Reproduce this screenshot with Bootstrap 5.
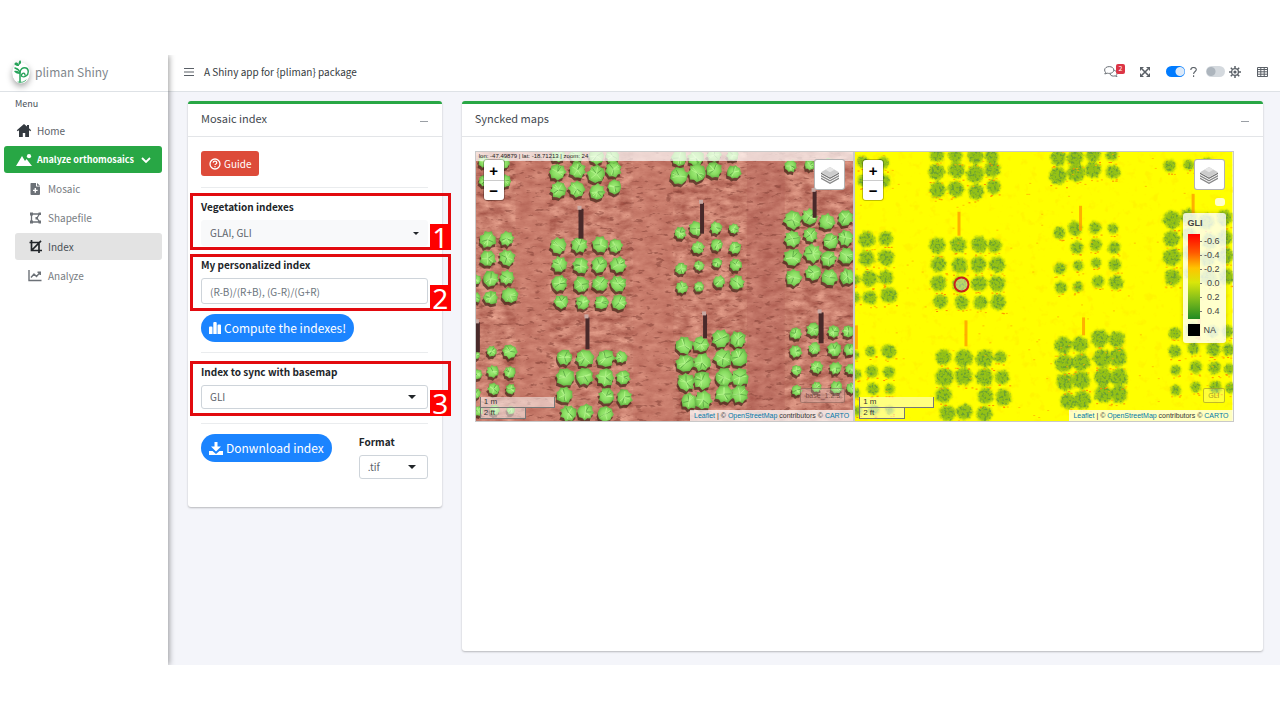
<!DOCTYPE html>
<html lang="en">
<head>
<meta charset="utf-8">
<meta name="viewport" content="width=device-width, initial-scale=1">
<title>pliman Shiny</title>
<link href="https://cdn.jsdelivr.net/npm/bootstrap@5.3.0/dist/css/bootstrap.min.css" rel="stylesheet">
<style>
body{font:400 10px/16px "Noto Sans CJK SC","Source Sans Pro",sans-serif;color:#343a40;background:#fff;padding:55px 0}
svg{display:block;flex:none}
.app{min-height:calc(100vh - 110px)}
.side{width:168px;flex:none;background:#fff;box-shadow:1px 0 6px rgba(0,0,0,.4);clip-path:inset(0 -12px 0 0);z-index:2}
.brand{height:37px;border-bottom:1px solid #dee2e6;padding:0 0 3px 12px;font-size:12px;color:#80868c;gap:5px}
.logo-disc{border-radius:50%;filter:drop-shadow(0 3px 3px rgba(0,0,0,.35))}
.side-head{font-size:9px;padding:4px 15px;height:25px;color:#495057}
.side a{display:flex;align-items:center;height:27px;border-radius:3px;color:#5b6168;text-decoration:none;padding-left:12px;margin:0 6px 2px 4px}
.side a svg{width:16px;margin-right:5px}
.side a.open{background:#28a745;color:#fff;font-weight:700;font-size:9px}
.side a.open svg.chev{width:10px;margin-left:7px}
.side a.sub{margin-left:15px;color:#777c82}
.side a.picked{background:#e3e3e3;color:#495057}
.main-area{background:#f4f5fa;min-width:0}
.topbar{height:37px;border-bottom:1px solid #dee2e6;background:#fff;padding:0 12px 3px 16px;color:#5a6067}
.topbar .title{color:#343a40;margin-left:10px}
.chat{position:relative;margin-right:22px}
.count-badge{position:absolute;left:12px;top:-2px;width:9px;height:10px;border-radius:2px;background:#dc3545;color:#fff;font-size:7px;line-height:9px;text-align:center}
.toggle{appearance:none;width:19px;height:11px;border-radius:6px;background:radial-gradient(circle at 5px 50%,#adb5bd 4px,#d4d9de 5px);border:0;margin:0}
.toggle:checked{background:radial-gradient(circle at 14px 50%,#dce9f8 4px,#007bff 5px)}
.board{padding:9px 7px 14px 10px}
.left-col,.right-col{padding-left:10px;padding-right:10px}
.panel{background:#fff;border:0;border-top:3px solid #28a745;border-radius:3px;box-shadow:0 1px 2px rgba(0,0,0,.25)}
.wide{min-height:550px}
.panel .head{height:33px;border-bottom:1px solid #e3e5e8;padding:0 14px 4px 13px;font-size:11px;color:#43494f}
.minus{border:0;background:none;width:8px;height:12px;padding:7px 0 0}
.minus::before{content:"";display:block;height:1px;background:#9a9fa5}
.panel .inner{padding:14px 14px 14px 13px}
hr{margin:0;border-color:#adb5bd}
.btn-guide{background:#dd4b39;color:#fff;border:0;border-radius:3px;height:25px;font-size:10px;line-height:16px;padding:0 8px;gap:3px;display:flex;align-items:center}
.btn-blue{background:#1b84ff;color:#fff;border:0;border-radius:14px;height:28px;font-size:12px;line-height:16px;padding:0 8px;display:flex;align-items:center;gap:3px}
.btn-guide:hover,.btn-blue:hover{filter:brightness(.95)}
.field{position:relative}
.field label,.fmt label{display:block;font-weight:700;color:#212529;height:21px;line-height:16px}
.step::before{content:"";position:absolute;inset:-6px -23px -4px -11px;border:3px solid #e20a0f;z-index:3;pointer-events:none}
.step.low::before{top:-3px;bottom:-7px}
.step-no{position:absolute;right:-23px;bottom:-4px;width:21px;height:26px;background:#fe0000;color:#fff;font:28px/26px "Noto Sans",sans-serif;text-align:center;z-index:4}
.step.low .step-no{bottom:-7px}
.ctl{font-size:10px;line-height:14px;color:#5c636a;height:24px;padding:0 8px;border:1px solid #ced4da;border-radius:3px;width:100%;display:block;appearance:none;background-color:#fff}
.ctl.tall{height:26px}
.ctl::placeholder{color:#6c757d;opacity:1}
select.ctl{background-repeat:no-repeat;background-position:right 11px center;background-size:8px 4px;background-image:url("data:image/svg+xml,%3Csvg xmlns='http://www.w3.org/2000/svg' viewBox='0 0 8 4'%3E%3Cpath d='M0 0h8L4 4z' fill='%23212529'/%3E%3C/svg%3E")}
select.ctl.flat{background-color:#f8f9fa;border-color:#f8f9fa;background-size:6px 3px;background-position:right 8px center}
.fmt{width:69px}
.rule-top{margin-top:11px}
.gap-s{margin-top:10px}
.gap-m{margin-top:11px}
.gap-l{margin-top:14px}
.last-row{padding-bottom:14px}
.maps{width:98%}
.map-pane{position:relative;height:271px;border:1px solid #c9c9c9;font-family:"Liberation Sans",Arial,sans-serif;color:#333;overflow:hidden;flex:1 1 0;min-width:0}
.map-pane>svg{width:100%;height:100%}
.over{position:absolute}
.coords{left:0;right:0;top:0;height:9px;background:rgba(255,255,255,.7);font-size:6px;line-height:8px;padding-left:3px;color:#222}
.zoomer{left:8px;top:8px;border-radius:3px;box-shadow:0 0 0 1px rgba(0,0,0,.25);overflow:hidden;width:20px}
.zoomer button{display:block;border:0;background:#fff;width:20px;height:20px;font:700 15px/17px "Liberation Sans",sans-serif;padding:0;color:#000}
.zoomer button+button{border-top:1px solid #ccc}
.layers{right:8px;top:7px;width:31px;height:31px;background:#fff;border:1px solid rgba(0,0,0,.3);border-radius:3px;padding:0;display:flex;align-items:center;justify-content:center}
.scale{left:4px;bottom:2px;font-size:8px;line-height:10px;color:#333}
.scale div{background:rgba(255,255,255,.5);border:1px solid #777;border-top:0;padding-left:3px;height:11px}
.scale .m{width:75px}
.scale .ft{width:46px}
.attrib{right:0;bottom:0;background:rgba(255,255,255,.75);font-size:7px;line-height:11px;height:11px;padding:0 4px;white-space:nowrap}
.attrib a{color:#0078a8;text-decoration:none}
.tag-name{right:8px;bottom:18px;height:15px;border:1px solid rgba(90,60,50,.4);border-radius:2px;background:rgba(255,255,255,.22);font-size:7px;line-height:13px;padding:0 4px;color:rgba(80,40,30,.65)}
.tag-name.y{color:#a59a28;border-color:rgba(140,130,30,.55)}
.chip{right:8px;top:46px;width:10px;height:8px;border-radius:3px;background:rgba(255,255,255,.8)}
.legend{right:7px;top:61px;width:43px;height:130px;border-radius:3px;background:rgba(255,255,255,.8);box-shadow:0 0 4px rgba(0,0,0,.2);font-size:9px;line-height:14px;padding:3px 5px;color:#444}
.legend .ramp{width:12px;height:85px;background:linear-gradient(#f00,#ff5a00 22%,#ffc400 40%,#d8e60a 57%,#7dbb1c 78%,#228b22)}
.legend ul{height:85px}
.legend li{line-height:14px;height:14px;display:flex;width:20px;justify-content:flex-end;position:relative}
.legend li::before{content:"";position:absolute;left:0;top:7px;width:2px;height:1px;background:#777}
.legend .na{width:12px;height:12px;background:#000}
</style>
</head>
<body>
<div class="app d-flex">
  <aside class="side">
    <div class="brand d-flex align-items-center">
      <svg class="logo-disc" width="18" height="24" viewBox="0 0 18 24"><ellipse cx="9" cy="13" rx="9" ry="10.500" fill="#fff"/><g fill="none" stroke="#27a35a" stroke-linecap="round"><path d="M3 8c3 1 5 3 5 6v8" stroke-width="1.500"/><path d="M8 13c0-4 3-6 6-5s3 6 0 8-6 0-4-2 3 0 3 1" stroke-width="1.400"/><path d="M6 22c3 1 7 0 8-2" stroke-width=".800"/></g><path d="M7 6C3 6 2 4 1 2c4 0 6 1 6 4zM7 5c-1-2 0-4 1-5 2 2 1 4-1 5zM2 11c3-1 5 0 6 3-3 0-5-1-6-3z" fill="#27a35a"/></svg>
      <span>pliman Shiny</span>
    </div>
    <div class="side-head">Menu</div>
    <nav>
      <a href="#"><svg height="13" viewBox="0 0 16 13"><path fill="#343a40" d="M8 0 .8 6.300l.9 1L3 6.200V13h3.800V9h2.400v4H13V6.200l1.300 1.100.9-1L13 4.300V1h-2v1.600z"/></svg>Home</a>
      <a href="#" class="open"><svg height="12" viewBox="0 0 16 12"><path fill="#fff" d="M0 12 6 2l3 5 1.500-2L16 12z"/><circle cx="13" cy="2.200" r="2.100" fill="#fff"/></svg>Analyze orthomosaics<svg class="chev" height="6" viewBox="0 0 10 6"><path d="m1 1 4 4 4-4" fill="none" stroke="#fff" stroke-width="1.800"/></svg></a>
      <a href="#" class="sub"><svg height="12" viewBox="0 0 16 12"><path fill="#6c7177" fill-rule="evenodd" d="M4 0h5v3.500h4V11q0 1-1 1H4.500q-1 0-1-1V1q0-1 .5-1zm6 0 3 2.800h-3zM7.600 5v1.700H6v1.400h1.600v1.700H9V8.100h1.600V6.700H9V5z"/></svg>Mosaic</a>
      <a href="#" class="sub"><svg height="12" viewBox="0 0 16 12"><g fill="none" stroke="#6c7177" stroke-width="1.300"><path d="M4.500 2h8L10 6l2.500 4h-8z"/></g><path fill="#6c7177" d="M3 .500h3v3H3zm8.500 0h2.500v2.500h-2.500zM3 8.500h3v3H3zm8.500 0h2.500v3h-2.500zM8.500 5h2.400v2.400H8.500z"/></svg>Shapefile</a>
      <a href="#" class="sub picked"><svg height="13" viewBox="0 0 16 13"><path d="M2.500 2.500h9.500V13M4.500 0v10.500H15M4.500 10.500 14 .8" fill="none" stroke="#212529" stroke-width="1.700"/></svg>Index</a>
      <a href="#" class="sub"><svg height="12" viewBox="0 0 16 12"><path d="M2 0v10.500h12.500M4 7.500 7 4l2.500 2.500L13 2.500M10.500 2.300h2.800V5" fill="none" stroke="#6c7177" stroke-width="1.400"/></svg>Analyze</a>
    </nav>
  </aside>

  <div class="main-area flex-grow-1">
    <header class="topbar d-flex align-items-center">
      <svg width="10" height="10" viewBox="0 0 10 10"><path d="M0 1.500h10M0 5h10M0 8.500h10" stroke="#5a6067" stroke-width="1.200"/></svg>
      <span class="title">A Shiny app for {pliman} package</span>
      <div class="ms-auto d-flex align-items-center">
        <span class="chat"><svg width="14" height="11" viewBox="0 0 14 11"><g fill="#fff" stroke="#6c7177"><path d="M6 4.500c3-1 7 0 7 3 0 1-.5 1.500-.8 1.800l.8 1.200-2-.6c-2 .6-4.500 0-5-2z"/><path d="M5.200.6C2.600.6.600 2 .600 4c0 1 .5 1.800 1 2.300L.800 8l2.400-.8c3.500.8 6.600-.7 6.600-3.200C9.800 2 7.800.6 5.200.6z"/></g></svg><span class="count-badge">2</span></span>
        <svg class="me-3" width="10" height="10" viewBox="0 0 10 10"><path d="M2 2l6 6M8 2 2 8" stroke="#5a6067" stroke-width="1.600"/><path fill="#5a6067" d="M0 0h4L0 4zM10 0v4L6 0zM0 10V6l4 4zM10 10H6l4-4z"/></svg>
        <input class="toggle" type="checkbox" checked aria-label="Help">
        <svg class="ms-1 me-2" width="9" height="10" viewBox="0 0 9 10"><path d="M1.800 3C1.800-.3 7.300-.2 7.300 2.600 7.300 4.500 4.600 4.500 4.600 7M4.600 8.300V10" fill="none" stroke="#5a6067" stroke-width="1.100"/></svg>
        <input class="toggle" type="checkbox" aria-label="Dark mode">
        <svg class="ms-1 me-3" width="12" height="12" viewBox="0 0 12 12"><path d="M6 0v12M0 6h12M1.800 1.800l8.400 8.400M10.200 1.800l-8.400 8.400" stroke="#5a6067" stroke-width="1.500"/><circle cx="6" cy="6" r="3.400" fill="#fff" stroke="#5a6067" stroke-width="1.300"/><circle cx="6" cy="6" r="1.600" fill="#5a6067"/></svg>
        <svg width="11" height="10" viewBox="0 0 11 10"><path d="M.5.5h10v9H.5zM.5 2.500h10M.5 4.800h10M.5 7.200h10M3.800.5v9M7.200.5v9" fill="none" stroke="#5a6067"/></svg>
      </div>
    </header>

    <div class="board">
      <div class="row m-0 align-items-start">
        <div class="col-3 left-col">
          <section class="card panel">
            <div class="head d-flex align-items-center justify-content-between"><span>Mosaic index</span><button class="minus" aria-label="Collapse"></button></div>
            <form class="inner">
              <button type="button" class="btn-guide"><svg width="12" height="12" viewBox="0 0 12 12"><circle cx="6" cy="6" r="5" fill="none" stroke="#fff" stroke-width="1.300"/><path d="M4.200 4.800c0-2.200 3.600-2.200 3.600 0 0 1.200-1.800 1-1.800 2.200M6 8v1.200" fill="none" stroke="#fff" stroke-width="1.200"/></svg>Guide</button>
              <hr class="rule-top">
              <div class="field step gap-m">
                <label for="veg">Vegetation indexes</label>
                <select id="veg" class="ctl tall flat"><option>GLAI, GLI</option></select>
                <span class="step-no">1</span>
              </div>
              <div class="field step low gap-m">
                <label for="own">My personalized index</label>
                <input id="own" class="ctl tall" type="text" placeholder="(R-B)/(R+B), (G-R)/(G+R)">
                <span class="step-no">2</span>
              </div>
              <button type="button" class="btn-blue gap-s"><svg width="12" height="12" viewBox="0 0 12 12"><path fill="#fff" d="M0 5.500q0-1 1-1h1.500q1 0 1 1V12H0zM4.300 1q0-1 1-1h1.400q1 0 1 1v11H4.300zM8.500 3.500q0-1 1-1H11q1 0 1 1V12H8.500z"/></svg>Compute the indexes!</button>
              <hr class="gap-s">
              <div class="field step low gap-m">
                <label for="sync">Index to sync with basemap</label>
                <select id="sync" class="ctl"><option>GLI</option></select>
                <span class="step-no">3</span>
              </div>
              <hr class="gap-l">
              <div class="d-flex justify-content-between align-items-start gap-s last-row">
                <button type="button" class="btn-blue"><svg width="14" height="13" viewBox="0 0 14 13"><path fill="#fff" d="M5.500 0h3v4.500H12l-5 5-5-5h3.500zM0 9h3.500L7 12l3.500-3H14v4H0z"/></svg>Donwnload index</button>
                <div class="fmt"><label for="fmt">Format</label><select id="fmt" class="ctl"><option>.tif</option></select></div>
              </div>
            </form>
          </section>
        </div>
        <div class="col-9 right-col">
          <section class="card panel wide">
            <div class="head d-flex align-items-center justify-content-between"><span>Syncked maps</span><button class="minus" aria-label="Collapse"></button></div>
            <div class="inner">
              <div class="maps d-flex">
                <div class="map-pane">
                  <svg id="soil" viewBox="0 0 379 270" preserveAspectRatio="xMidYMid slice"></svg>
                  <div class="over coords">lon: -47.49879 | lat: -18.71213 | zoom: 24</div>
                  <div class="over zoomer"><button aria-label="Zoom in">+</button><button aria-label="Zoom out">−</button></div>
                  <button class="over layers" aria-label="Layers"><svg width="20" height="20" viewBox="0 0 20 20"><path fill="#888" d="m1 12.500 9 5 9-5v1.500l-9 5-9-5zM1 10l9 5 9-5v1.500l-9 5-9-5z"/><path fill="#777" d="m1 7.500 9 5 9-5V9l-9 5-9-5z"/><path fill="#ccc" d="m10 2 9 5.300-9 5-9-5z"/><path fill="#e6e6e6" d="m10 2 4.500 2.700-4.500 2.500-4.500-2.500z"/></svg></button>
                  <div class="over tag-name">base_1.2.3</div>
                  <div class="over scale"><div class="m">1 m</div><div class="ft">2 ft</div></div>
                  <div class="over attrib"><a href="#">Leaflet</a> | © <a href="#">OpenStreetMap</a> contributors © <a href="#">CARTO</a></div>
                </div>
                <div class="map-pane">
                  <svg id="gli" viewBox="0 0 379 270" preserveAspectRatio="xMidYMid slice"></svg>
                  <div class="over zoomer"><button aria-label="Zoom in">+</button><button aria-label="Zoom out">−</button></div>
                  <button class="over layers" aria-label="Layers"><svg width="20" height="20" viewBox="0 0 20 20"><path fill="#888" d="m1 12.500 9 5 9-5v1.500l-9 5-9-5zM1 10l9 5 9-5v1.500l-9 5-9-5z"/><path fill="#777" d="m1 7.500 9 5 9-5V9l-9 5-9-5z"/><path fill="#ccc" d="m10 2 9 5.300-9 5-9-5z"/><path fill="#e6e6e6" d="m10 2 4.500 2.700-4.500 2.500-4.500-2.500z"/></svg></button>
                  <div class="over chip"></div>
                  <div class="over legend">
                    <b>GLI</b>
                    <div class="d-flex mt-1 mb-1"><div class="ramp"></div>
                      <ul class="list-unstyled mb-0"><li>-0.6</li><li>-0.4</li><li>-0.2</li><li>0.0</li><li>0.2</li><li>0.4</li></ul></div>
                    <div class="d-flex align-items-center"><span class="na"></span><span class="ms-1">NA</span></div>
                  </div>
                  <div class="over tag-name y">GLI</div>
                  <div class="over scale"><div class="m">1 m</div><div class="ft">2 ft</div></div>
                  <div class="over attrib"><a href="#">Leaflet</a> | © <a href="#">OpenStreetMap</a> contributors © <a href="#">CARTO</a></div>
                </div>
              </div>
            </div>
          </section>
        </div>
      </div>
    </div>
  </div>
</div>
<script src="https://cdn.jsdelivr.net/npm/bootstrap@5.3.0/dist/js/bootstrap.bundle.min.js"></script>
<script>
// Plants of the field: x, y, radius
const plants = `82 20 8,102 18 8,121 22 9,138 17 8,83 38 8,101 37 8,122 40 8,139 35 7,82 3 7,101 3 7,121 4 8,137 4 7,8 10 6,28 11 6,9 29 6,29 29 6,
12 88 8,31 87 7,12 107 8,31 106 8,15 127 8,31 126 7,15 146 7,34 144 8,0 128 5,0 146 5,
83 94 8,104 93 8,125 93 8,140 94 7,84 113 8,105 114 8,124 113 8,143 113 8,84 132 8,106 133 8,125 132 8,143 132 8,86 150 7,107 151 7,126 151 7,144 151 8,
16 200 5,34 200 7,17 220 6,34 221 6,18 238 6,35 238 5,0 204 4,1 223 5,0 242 5,2 260 5,19 259 5,35 259 4,
89 206 8,109 207 9,130 207 9,146 206 6,90 226 9,109 225 9,130 226 9,148 226 7,89 244 8,131 245 8,149 246 8,93 262 8,110 261 8,130 263 8,
204 6 8,221 6 8,239 3 7,258 3 6,204 24 9,222 21 9,239 18 8,259 20 7,
205 81 6,221 77 7,241 76 6,259 77 5,223 96 6,242 93 6,260 96 6,206 117 6,224 114 5,242 111 5,261 113 6,207 136 6,224 135 5,244 130 6,262 131 7,
209 194 9,226 193 8,246 187 9,263 188 8,210 212 9,227 211 9,248 207 9,264 206 9,211 231 9,227 229 9,249 226 9,265 226 9,214 250 8,228 249 9,249 243 9,265 243 9,
316 14 6,335 13 5,354 12 6,318 68 9,335 65 8,352 70 8,371 66 8,318 87 8,336 83 7,356 89 8,371 86 8,318 106 9,338 102 9,354 107 8,372 104 8,319 126 8,339 121 8,355 126 8,373 125 8,
321 182 6,339 178 7,359 180 6,374 180 6,321 200 6,340 197 6,360 198 7,375 198 6,322 219 5,342 216 6,361 217 6,376 218 5,322 239 5,342 236 5,362 236 6,377 237 5`
  .split(',').map(p => p.trim().split(' ').map(Number));
// Stakes between the plots: x, top, width, height
const stakes = [[103,57,5,30],[110,166,4,32],[0,171,4,30],[225,51,4,31],[228,163,4,24],[338,39,4,27],[344,161,5,31]];

let seed = 7;
const rnd = () => (seed = (seed * 16807) % 2147483647) / 2147483647;
const leafShape = (x, y, r) => {
  let d = '';
  const n = 16, turn = rnd() * 6;
  for (let i = 0; i < n; i++) {
    const a = turn + i * 2 * Math.PI / n, q = (r + .5) * (i % 2 ? .84 : 1) * (.9 + rnd() * .2);
    d += (i ? 'L' : 'M') + (x + q * Math.cos(a)).toFixed(1) + ' ' + (y + q * Math.sin(a)).toFixed(1);
  }
  return d + 'z';
};
const shapes = plants.map(p => leafShape(...p));

let s = `<defs><filter id="earth" x="0" y="0" width="100%" height="100%" color-interpolation-filters="sRGB"><feTurbulence type="fractalNoise" baseFrequency=".07 .14" numOctaves="4" seed="4"/><feColorMatrix values=".36 0 0 0 .6  .42 0 0 0 .28  .38 0 0 0 .235  0 0 0 0 1"/></filter>
<filter id="specks" x="0" y="0" width="100%" height="100%" color-interpolation-filters="sRGB"><feTurbulence type="fractalNoise" baseFrequency=".1 .28" numOctaves="3" seed="9"/><feColorMatrix values="0 0 0 0 .5  0 0 0 0 .24  0 0 0 0 .2  7 0 0 0 -4.3"/></filter>
<radialGradient id="leaf"><stop offset="0" stop-color="#a2ec7c"/><stop offset=".6" stop-color="#88dc60"/><stop offset="1" stop-color="#66b546"/></radialGradient>
<filter id="soft"><feGaussianBlur stdDeviation=".7"/></filter></defs>
<rect width="379" height="270" filter="url(#earth)"/><g fill="#c87a6a" opacity=".5" filter="url(#soft)"><rect x="40" y="-5" width="34" height="280"/><rect x="158" y="-5" width="40" height="280"/></g><rect x="272" width="38" height="270" fill="#b5665a" opacity=".45"/>
<rect width="379" height="270" filter="url(#specks)" opacity=".5"/><g filter="url(#soft)"><g transform="translate(-1 3)" fill="#4a2a1c" opacity=".75">`;
shapes.forEach(d => s += `<path d="${d}"/>`);
s += '</g><g>';
shapes.forEach((d, i) => {
  const [x, y, r] = plants[i];
  s += `<path d="${d}" fill="url(#leaf)"/>`;
  for (let k = 0; k < 6; k++) {
    const a = rnd() * 6.3, q = r * .75;
    s += `<path d="M${x} ${y}l${(q * Math.cos(a)).toFixed(1)} ${(q * Math.sin(a)).toFixed(1)}" stroke="${k % 3 ? '#baf890' : '#4f9a3c'}" stroke-width="1" opacity=".7"/>`;
  }
});
s += '</g>';
stakes.forEach(([x, y, w, h]) => s += `<rect x="${x}" y="${y}" width="${w}" height="${h}" fill="#4a2a2b"/><rect x="${x - 1}" y="${y - 3}" width="4" height="4" fill="#c9aaa4"/>`);
document.getElementById('soil').innerHTML = s + '</g>';

s = `<defs><filter id="grain" x="0" y="0" width="100%" height="100%"><feTurbulence type="fractalNoise" baseFrequency=".4" numOctaves="2" seed="3" result="n"/><feColorMatrix in="n" values="0 0 0 0 .15  0 0 0 0 .36  0 0 0 0 .03  5 0 0 0 -2.4" result="g"/><feComposite in="g" in2="SourceGraphic" operator="in" result="t"/><feMerge><feMergeNode in="SourceGraphic"/><feMergeNode in="t"/></feMerge></filter>
<filter id="haze" x="0" y="0" width="100%" height="100%"><feTurbulence type="fractalNoise" baseFrequency=".12" numOctaves="3" seed="12"/><feColorMatrix values="0 0 0 0 1  0 0 0 0 .82  0 0 0 0 0  5 0 0 0 -2.9"/></filter><filter id="fuzz"><feGaussianBlur stdDeviation="1"/></filter></defs>
<rect width="379" height="270" fill="#ff0"/><rect width="379" height="270" filter="url(#haze)" opacity=".45"/><g filter="url(#grain)"><g filter="url(#fuzz)" fill="#94c216">`;
shapes.forEach(d => s += `<path d="${d}"/>`);
s += '</g></g>';
plants.forEach(([x, y, r]) => {
  for (let k = 0; k < 3; k++) s += `<rect x="${(x - r + rnd() * 2 * r).toFixed(1)}" y="${(y + r + rnd() * 3).toFixed(1)}" width="2" height="1" fill="${rnd() > .5 ? '#ff8a00' : '#ffb300'}"/>`;
});
for (let k = 0; k < 130; k++) s += `<rect x="${Math.round(rnd() * 379)}" y="${Math.round(rnd() * 270)}" width="2" height="1" fill="#ffab00" opacity=".7"/>`;
stakes.forEach(([x, y, w, h]) => s += `<rect x="${x}" y="${y + 3}" width="3" height="${h - 6}" fill="#ffa200" opacity=".85"/>`);
s += '<circle cx="107" cy="133" r="7" fill="#fff" fill-opacity=".35" stroke="#c8201c" stroke-width="2"/>';
document.getElementById('gli').innerHTML = s;
</script>
</body>
</html>
